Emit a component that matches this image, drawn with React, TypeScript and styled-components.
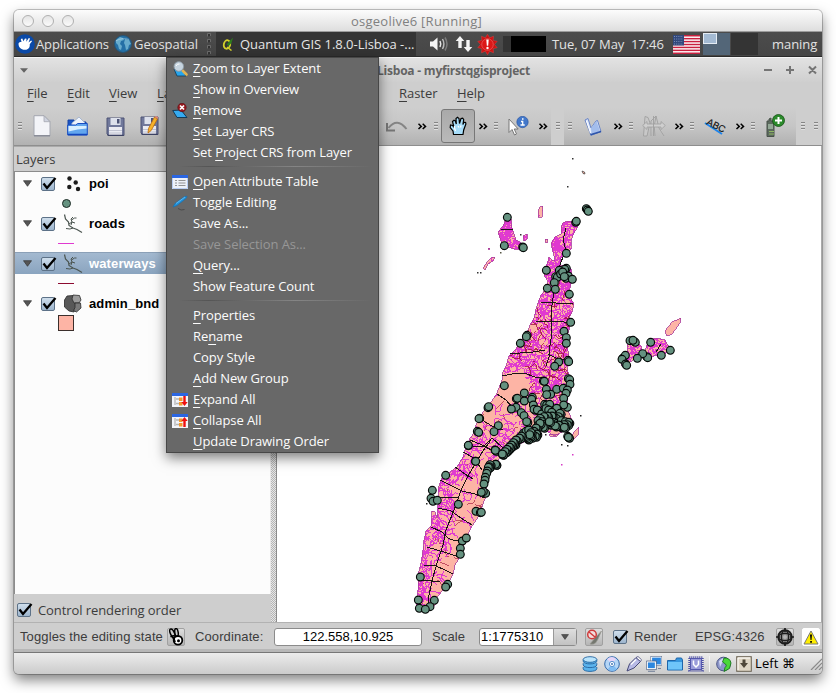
import React from "react";
import styled, { createGlobalStyle } from "styled-components";

const UI = `"Open Sans", "Noto Sans", sans-serif`;
const SANS = `"Liberation Sans", Arial, sans-serif`;

const Global = createGlobalStyle`
  *, *::before, *::after { box-sizing: border-box; }
  html, body { margin: 0; height: 100%; background: #fff; overflow: hidden; }
  svg { display: block; flex: none; }
`;

const Desktop = styled.div`
  height: 693px;
  width: 836px;
  padding: 10px 14px;
  font: 13px/1 ${UI};
  color: #3c3c3c;
`;

const VmWindow = styled.div`
  position: relative;
  display: flex;
  flex-direction: column;
  width: 808px;
  height: 664px;
  border-radius: 5px;
  background: #cecece;
  box-shadow: 0 0 0 1px rgba(0, 0, 0, 0.22), 0 6px 13px rgba(0, 0, 0, 0.5);
`;

const VmTitle = styled.div`
  height: 22px;
  flex: none;
  display: flex;
  align-items: center;
  padding-left: 8px;
  border-radius: 5px 5px 0 0;
  background: linear-gradient(#fcfcfc, #dedede);
  border-bottom: 1px solid #9c9c9c;
`;

const TrafficLight = styled.span`
  width: 12px;
  height: 12px;
  margin-right: 8px;
  border-radius: 50%;
  border: 1.5px solid #b0b0b0;
  background: linear-gradient(#e4e4e4, #fbfbfb);
`;

const VmCaption = styled.div`
  margin-left: 269px;
  padding-top: 1px;
  font-size: 13px;
  letter-spacing: 0.25px;
  color: #808080;
  white-space: nowrap;
`;

const Panel = styled.div`
  height: 25px;
  flex: none;
  display: flex;
  align-items: center;
  background: linear-gradient(#4c4c4c, #464646);
  border-bottom: 1px solid #2b2b2b;
  color: #e2e2e2;
`;

const Slot = styled.div<{ $w: number; $center?: boolean }>`
  width: ${(p) => p.$w}px;
  flex: none;
  display: flex;
  align-items: center;
  justify-content: ${(p) => (p.$center ? "center" : "flex-start")};
  white-space: nowrap;
`;

const PanelText = styled(Slot)<{ $ls?: number }>`
  height: 24px;
  letter-spacing: ${(p) => p.$ls ?? -0.05}px;
`;

const UserName = styled(PanelText)`
  padding-left: 13px;
`;

const TaskButton = styled.div`
  width: 200px;
  height: 24px;
  flex: none;
  display: flex;
  align-items: center;
  background: #343434;
  color: #e6e6e6;
  letter-spacing: -0.03px;
  white-space: nowrap;
`;

const CpuMeter = styled.div`
  width: 43px;
  height: 16px;
  flex: none;
  margin: 0 6px 0 1px;
  border-left: 8px solid #343434;
  background: #000;
`;

const Desk = styled.div<{ $active?: boolean }>`
  width: 27px;
  height: 22px;
  margin-right: 1px;
  flex: none;
  background: ${(p) => (p.$active ? "#536678" : "#343434")};
`;

const DeskWindow = styled.div`
  width: 14px;
  height: 11px;
  border: 1px solid #e4ecf4;
  background: #a3bad3;
`;

const AppTitle = styled.div`
  height: 25px;
  flex: none;
  display: flex;
  align-items: center;
  border-top: 1px solid #f6f6f6;
  background: linear-gradient(#e2e2e2, #cfcfcf);
`;

const AppCaption = styled.div`
  width: 490px;
  padding-top: 1px;
  text-align: right;
  font-weight: 700;
  font-size: 12px;
  letter-spacing: -0.22px;
  color: #646464;
  white-space: nowrap;
`;

const MenuBar = styled.div`
  height: 25px;
  flex: none;
  display: flex;
  align-items: center;
  padding: 0 0 3px 13px;
  letter-spacing: -0.05px;
`;

const Mnemonic = styled.span`
  text-decoration: underline;
  text-underline-offset: 3px;
  text-decoration-thickness: 1px;
  text-decoration-skip-ink: none;
`;

const ToolBar = styled.div`
  height: 39px;
  flex: none;
  display: flex;
  border-bottom: 1px solid #8e8e8e;
`;

const ToolGroup = styled.div<{ $plain?: boolean }>`
  display: flex;
  align-items: center;
  background: ${(p) => (p.$plain ? "#cecece" : "linear-gradient(#cecece, #c6c6c6 50%, #b1b1b1)")};
`;

const ActiveTool = styled.div`
  width: 34px;
  height: 34px;
  margin: 0 1px;
  flex: none;
  display: flex;
  align-items: center;
  justify-content: center;
  border: 1px solid #777;
  border-radius: 3px;
  background: linear-gradient(#a9a9a9, #b9b9b9);
`;

const GripLines = styled.div`
  width: 4px;
  height: 8px;
  background: repeating-linear-gradient(#858585 0 1px, #e0e0e0 1px 2px, transparent 2px 3px);
`;

const Workspace = styled.div`
  height: 476px;
  flex: none;
  display: flex;
`;

const Dock = styled.div`
  width: 257px;
  display: flex;
  flex-direction: column;
`;

const DockTitle = styled.div`
  height: 26px;
  padding-left: 2px;
  display: flex;
  align-items: center;
  border-top: 1px solid #aaa;
  border-bottom: 1px solid #8c8c8c;
`;

const Tree = styled.div`
  height: 422px;
  background: #fcfcfc;
  border-left: 1px solid #8c8c8c;
  border-right: 1px solid #e8e8e8;
`;

const LayerRow = styled.div<{ $selected?: boolean }>`
  height: 22px;
  display: flex;
  align-items: center;
  padding-left: 8px;
  font: 700 13px/22px ${SANS};
  letter-spacing: 0.12px;
  color: ${(p) => (p.$selected ? "#fff" : "#000")};
  background: ${(p) => (p.$selected ? "linear-gradient(#a3b9d0, #8aa4bf)" : "transparent")};
  border-top: 1px solid ${(p) => (p.$selected ? "#8ba0b7" : "transparent")};
`;

const LegendRow = styled.div`
  height: 18px;
  display: flex;
  align-items: center;
  padding-left: 43px;
`;

const PointSymbol = styled.div`
  width: 9px;
  height: 9px;
  margin-left: 4px;
  border-radius: 50%;
  border: 1px solid #1c2a25;
  background: #659280;
`;

const LineSymbol = styled.div<{ $color: string }>`
  width: 16px;
  height: 1px;
  background: ${(p) => p.$color};
`;

const FillSymbol = styled.div`
  width: 16px;
  height: 16px;
  border: 1px solid #3b2f2c;
  background: #fdb4a5;
`;

const Box = styled.div`
  width: 14px;
  height: 14px;
  flex: none;
  border: 1px solid #5d7288;
  border-radius: 2px;
  background: linear-gradient(#cfdeec, #9db5cd);
`;

const DockFooter = styled.div`
  height: 28px;
  display: flex;
  align-items: center;
  padding: 4px 0 0 3px;
  gap: 7px;
  letter-spacing: -0.08px;
`;

const Splitter = styled.div`
  width: 6px;
  border-right: 1px solid #8b8b8b;
  background: repeating-conic-gradient(#b5b5b5 0 25%, #e6e6e6 0 50%) 0 0 / 2px 2px;
`;

const Canvas = styled.div`
  flex: 1;
  background: #fff;
  border-right: 1px solid #aaa;
`;

const StatusBar = styled.div`
  height: 30px;
  flex: none;
  display: flex;
  align-items: center;
  padding: 2px 0 0 6px;
  border-top: 1px solid #b2b2b2;
  border-bottom: 3px solid #b7b7b7;
  font: 13px/16px ${SANS};
  letter-spacing: 0.11px;
`;

const Field = styled.div<{ $w: number }>`
  width: ${(p) => p.$w}px;
  height: 18px;
  flex: none;
  display: flex;
  align-items: center;
  justify-content: center;
  border: 1px solid #8b8b8b;
  border-radius: 3px;
  background: #fff;
  color: #000;
  letter-spacing: 0;
`;

const Combo = styled(Field)`
  justify-content: space-between;
  padding-left: 1px;
  letter-spacing: 0.1px;
`;

const ComboArrow = styled.div`
  width: 23px;
  height: 16px;
  display: flex;
  align-items: center;
  justify-content: center;
  border-left: 1px solid #999;
  background: linear-gradient(#dedede, #c2c2c2);
`;

const TinyButton = styled.div<{ $white?: boolean }>`
  width: 18px;
  height: 18px;
  flex: none;
  display: flex;
  align-items: center;
  justify-content: center;
  border: 1px solid ${(p) => (p.$white ? "#fff" : "#a0a0a0")};
  border-radius: 2px;
  background: ${(p) => (p.$white ? "#fff" : "linear-gradient(#ddd, #b5b5b5)")};
`;

const VmStatus = styled.div`
  height: 22px;
  flex: none;
  display: flex;
  align-items: center;
  padding-left: 565px;
  border-top: 1px solid #777;
  border-radius: 0 0 5px 5px;
  background: linear-gradient(#ececec, #cbcbcb);
  color: #000;
`;

const HostKey = styled.div`
  width: 56px;
  padding-left: 1px;
  flex: none;
  white-space: nowrap;
  letter-spacing: 0.1px;
`;

const Divider = styled.div`
  width: 1px;
  height: 16px;
  margin: 0 4px 0 3px;
  background: #f4f4f4;
`;

const ContextMenu = styled.div`
  position: absolute;
  left: 152px;
  top: 47px;
  width: 213px;
  height: 396px;
  border: 1px solid #474747;
  background: #686868;
  box-shadow: 0 5px 12px rgba(0, 0, 0, 0.5);
  color: #fcfcfc;
  letter-spacing: -0.08px;
`;

const MenuItem = styled.div<{ $disabled?: boolean }>`
  height: 21px;
  display: flex;
  align-items: center;
  white-space: pre;
  color: ${(p) => (p.$disabled ? "#979797" : "inherit")};
`;

const MenuIcon = styled.div`
  width: 26px;
  padding-left: 5px;
  flex: none;
`;

const MenuRule = styled.div`
  height: 1px;
  margin: 3px 6px 4px 12px;
  background: linear-gradient(90deg, transparent, #555 15%, #858585 60%, transparent);
`;

/* ---------- shared bits ---------- */

// "&" marks the letter that carries the keyboard underline.
const Label = ({ text }: { text: string }) => {
  const i = text.indexOf("&");
  if (i < 0) return <span>{text}</span>;
  return (
    <span>
      {text.slice(0, i)}
      <Mnemonic>{text[i + 1]}</Mnemonic>
      {text.slice(i + 2)}
    </span>
  );
};

const Check = () => (
  <Box>
    <svg width="18" height="16" viewBox="0 0 18 16" overflow="visible">
      <path d="M1.500 5.500 5 10 L13.500 0" fill="none" stroke="#000" strokeWidth="2.300" />
    </svg>
  </Box>
);

const Grip = ({ w = 12 }: { w?: number }) => (
  <Slot $w={w} $center>
    <GripLines />
  </Slot>
);

const More = ({ w = 15 }: { w?: number }) => (
  <Slot $w={w} $center>
    <svg width="10" height="7" viewBox="0 0 10 7" fill="none" stroke="#000" strokeWidth="1.500">
      <path d="M1.500.8 4.300 3.400 1.500 6M5.700.8 8.500 3.400 5.700 6" />
    </svg>
  </Slot>
);

const Triangle = ({ size = 9, fill = "#555" }: { size?: number; fill?: string }) => (
  <svg width={size} height={size - 2} viewBox="0 0 9 7">
    <path d="M.5.7h8L4.500 6.300z" fill={fill} stroke="#333" strokeWidth=".7" />
  </svg>
);

const TitleArrow = () => (
  <svg width="8" height="5" viewBox="0 0 8 5">
    <path d="M0 .3h8L4 4.700z" fill="#646464" />
  </svg>
);

/* ---------- panel icons ---------- */

const XubuntuIcon = () => (
  <svg width="20" height="20" viewBox="0 0 20 20">
    <circle cx="10" cy="10" r="9.800" fill="#0b4aa8" />
    <path d="M3.500 9.500c.5-1.500 2-1.700 3-1.600L5.800 5l1.500-.5 1.200 2.800L10 4.500l1.500.2-.2 3 2.500-3.700 1.200.6-1.500 3.800 2.700-2 .8.900-2.300 3c.5 3-1.200 5.700-5 5.500C6 15.700 3.500 13.500 3.500 9.500z" fill="#fff" />
  </svg>
);

const GlobeIcon = () => (
  <svg width="18" height="18" viewBox="0 0 18 18">
    <circle cx="9" cy="9" r="8.500" fill="#2470a6" stroke="#285372" />
    <path d="M2 5 6 2l3 1 1 2-3 1-1 3 2 2-1 4-2-1-1-4-2-2zM11 4l4 1 2 4-2 1-1 4-2 1-1-5-1-2z" fill="#7fc0da" opacity=".75" />
    <path d="M1.500 6Q9 2 15 4.500" stroke="#fff" strokeOpacity=".3" fill="none" />
  </svg>
);

const PanelGrip = () => (
  <svg width="4" height="22" viewBox="0 0 4 22">
    {[0, 6, 12, 18].map((y) => (
      <path key={y} d={`M.5 ${y + 3.5}V${y + 0.5}H3.500V${y + 3}`} fill="#333" stroke="#777" strokeWidth=".8" />
    ))}
  </svg>
);

const QgisIcon = () => (
  <svg width="12" height="14" viewBox="0 0 12 14">
    <ellipse cx="5" cy="7.500" rx="3.200" ry="4.300" fill="none" stroke="#d5d22b" strokeWidth="1.800" transform="rotate(12 5 7.500)" />
    <path d="M5 10l4.500 3.500" stroke="#d5d22b" strokeWidth="1.500" />
    <path d="M4.500 7.500 11 .5 9.500 6 6.500 9z" fill="#2e7d1e" />
  </svg>
);

const VolumeIcon = () => (
  <svg width="20" height="16" viewBox="0 0 20 16">
    <path d="M1 5.500h3L8.500 1.500v13L4 10.500H1z" fill="#f4f4f4" />
    <path d="M11 5q1.500 3 0 6" stroke="#e8e8e8" strokeWidth="1.500" fill="none" />
    <path d="M13.500 3q2.800 5 0 10" stroke="#bbb" strokeWidth="1.500" fill="none" />
    <path d="M16 1.500q4 6.500 0 13" stroke="#7c7c7c" strokeWidth="1.500" fill="none" />
  </svg>
);

const NetworkIcon = () => (
  <svg width="18" height="18" viewBox="0 0 18 18" fill="#f4f4f4">
    <path d="M5 1 9.300 6H6.700v7H3.300V6H.700z" />
    <path d="M13 17 8.700 12h2.600V5h3.400v7h2.600z" />
  </svg>
);

const AlertIcon = () => {
  const pts = Array.from({ length: 20 }, (_, i) => {
    const r = i % 2 ? 7 : 10.2;
    const a = (i * Math.PI) / 10 - Math.PI / 2;
    return `${10.5 + r * Math.cos(a)},${10.5 + r * Math.sin(a)}`;
  }).join(" ");
  return (
    <svg width="21" height="21" viewBox="0 0 21 21">
      <polygon points={pts} fill="#cf1212" stroke="#e04040" strokeWidth=".5" />
      <circle cx="10.500" cy="10.500" r="5.800" fill="#dc1717" stroke="#ee7070" strokeWidth=".6" />
      <path d="M9.300 5.500h2.400l-.5 6.200H9.800z" fill="#fff" />
      <circle cx="10.500" cy="14" r="1.200" fill="#fff" />
    </svg>
  );
};

const FlagIcon = () => (
  <svg width="27" height="19" viewBox="0 0 27 19">
    <rect width="27" height="19" fill="#fff" />
    {[0, 1, 2, 3, 4, 5, 6].map((i) => (
      <rect key={i} y={i * 2.92} width="27" height="1.500" fill="#c9203f" />
    ))}
    <rect width="11" height="10.500" fill="#31487c" />
    {[1.5, 4, 6.5, 9].map((y) => (
      <path key={y} d={`M1 ${y}h9`} stroke="#8496bd" strokeWidth=".9" strokeDasharray="1 1.200" />
    ))}
  </svg>
);

/* ---------- toolbar icons ---------- */

const NewIcon = () => (
  <svg width="18" height="22" viewBox="0 0 18 22">
    <path d="M1 .7h10l6 6V21H1z" fill="#f3f4f8" stroke="#a4a7b0" />
    <path d="M11 .7v6h6z" fill="#cfd3df" stroke="#a4a7b0" strokeWidth=".8" />
    <path d="M1 20.700h16" stroke="#868995" strokeWidth="1.300" />
  </svg>
);

const FolderIcon = () => (
  <svg width="21" height="20" viewBox="0 0 21 20">
    <path d="M1 4h6l1 2h11v12H1z" fill="#1c56c4" stroke="#1443a4" />
    <path d="M5 7 12 1l6 6v6H4z" fill="#eef3fb" stroke="#9badcb" strokeWidth=".8" />
    <path d="M.7 9h8l2-1.500h9.600V19H.7z" fill="#62a6ee" stroke="#1a4ec2" />
    <path d="M1.500 10h18v2.500q-9 .5-18 3z" fill="#d9efff" />
    <path d="M1 18.500h19" stroke="#1346bd" strokeWidth="1.500" />
  </svg>
);

const Disk = () => (
  <g>
    <path d="M1 1h17v17.500H2.500L1 17z" fill="#70789b" stroke="#4c5375" />
    <rect x="4.500" y="1" width="10" height="7" fill="#dde1ec" />
    <rect x="11" y="2" width="2.500" height="4.500" fill="#4c5375" />
    <rect x="3" y="10" width="13" height="8" fill="#eaebf2" />
    <path d="M3 13.500h13M3 16h13" stroke="#c1c4d2" />
    <path d="M1.500 18.300h16" stroke="#3c4263" strokeWidth="1.200" />
  </g>
);

const SaveIcon = () => (
  <svg width="19" height="19" viewBox="0 0 19 19">
    <Disk />
  </svg>
);

const SaveAsIcon = () => (
  <svg width="19" height="20" viewBox="0 0 19 20">
    <Disk />
    <path d="M8 17 8.500 12.500 14.500 1l3 2-6.300 11.500z" fill="#f7b42b" stroke="#b96a14" strokeWidth=".8" />
    <path d="M14.500 1l3 2 .8-1.700L16 0z" fill="#e88a7c" />
  </svg>
);

const UndoIcon = () => (
  <svg width="22" height="12" viewBox="0 0 22 12">
    <path d="M2.500 8Q11-3 20.500 9" fill="none" stroke="#858585" strokeWidth="2" />
    <path d="M1 3v7.500h8" fill="none" stroke="#757575" strokeWidth="2" />
  </svg>
);

const HandIcon = () => (
  <svg width="18" height="20" viewBox="0 0 18 20">
    <path
      d="M4.500 18.500 4 15 1.200 11.500 1.500 9l2 .5 1.500 2L3.500 5.500 5 4.300 6.300 5l1 3L7 2.500 8.500 1.200 10 2.500l.5 5L12 2.500l1.700-.3 1 1.500-.8 4.800 1-2.300 1.700.3.300 1.500-2.200 6L14 18.500z"
      fill="#a8defa"
      stroke="#000"
      strokeWidth="1.200"
    />
    <path d="M5.500 10v2l1 3M9 10l1 1.500M12 9.500l-.5 2" stroke="#fff" strokeWidth="1.300" fill="none" />
  </svg>
);

const IdentifyIcon = () => (
  <svg width="22" height="20" viewBox="0 0 22 20">
    <path d="M2 3v13.500l3-3L7.500 19l2-1-2.300-5h4z" fill="#fff" stroke="#777" strokeWidth="1" />
    <circle cx="15.500" cy="6" r="5.700" fill="#4378ca" stroke="#234f9d" strokeWidth=".6" />
    <path d="M14 5.500h1.700V9M13.500 9h4.200M15 3h1.500" stroke="#fff" strokeWidth="1.300" fill="none" />
  </svg>
);

const VectorIcon = () => (
  <svg width="18" height="19" viewBox="0 0 18 19">
    <path d="M1 3 4 1.500l3 9.500L12 4l1.500-.5 3.500 11-10 3.800z" fill="#dbe6fa" stroke="#5d7cc4" strokeWidth=".9" />
    <path d="M7 11 7.500 17.500 16 14 12.500 4z" fill="#a3bdec" />
    <path d="M6.500 17.800 17 14.500" stroke="#2d54ab" strokeWidth="1.500" />
    <path d="M2.500 4 6.500 16" stroke="#fff" />
  </svg>
);

const MirrorIcon = () => (
  <svg width="24" height="22" viewBox="0 0 24 22" fill="none" stroke="#9f9f9f" strokeWidth=".9">
    <path d="M1.500 21 3 1.500l3 1L8 8l-3 13zM14 1 9 6v15M14 1q-3 10-1 20M14 1l3 12 5 8" fill="#c8c8c8" />
    <path d="M.7 10.500 5 6.500v2.500h14V6.500l4.300 4L19 14.500V12H5v2.500z" fill="#cfcfcf" strokeWidth=".8" />
    <path d="M11.500 1v20" />
  </svg>
);

const LabelIcon = () => (
  <svg width="22" height="18" viewBox="0 0 22 18">
    <path d="M1 6 18 17" stroke="#1c84ee" strokeWidth="2" />
    <text x="0" y="0" transform="translate(2 7) rotate(27)" fontFamily={SANS} fontSize="9.500" fill="#111" stroke="#111" strokeWidth=".2">
      ABC
    </text>
  </svg>
);

const GpsIcon = () => (
  <svg width="20" height="24" viewBox="0 0 20 24">
    <path d="M2 7h2V5l2-1v3h3v15.500H2z" fill="#5c6a5f" stroke="#475148" />
    <rect x="3" y="10" width="5" height="5" fill="#93a896" />
    <path d="M4 17.500h5M4 20h5" stroke="#8fb763" strokeWidth="1.200" />
    <circle cx="13.500" cy="6.500" r="6" fill="#2b8a2b" stroke="#145014" strokeWidth=".8" />
    <path d="M13.500 3v7M10 6.500h7" stroke="#fff" strokeWidth="2" />
  </svg>
);

/* ---------- layer icons ---------- */

const PointsGlyph = () => (
  <svg width="20" height="18" viewBox="0 0 20 18" fill="#1d1d1d">
    <circle cx="6.500" cy="3.500" r="2.200" />
    <circle cx="12.700" cy="7.500" r="2.200" />
    <circle cx="6.300" cy="12" r="2.200" />
    <circle cx="15" cy="14" r="2.200" />
  </svg>
);

const LinesGlyph = () => (
  <svg width="20" height="20" viewBox="0 0 20 20" fill="none" stroke="#4b5550">
    <path d="M1.500.5 2.500 5 5.500 8 6 11.500 10 14 14 15.500 19 18.500" strokeWidth="1.200" />
    <path d="M6 10 9 8 8 5 10 3M9 8 8 11M9 8l3 1M8.500 6l3-2h2M3 14.500l4 .5 3-1" strokeWidth="1" />
  </svg>
);

const PolygonGlyph = () => (
  <svg width="20" height="19" viewBox="0 0 20 19" stroke="#2a2a2a" strokeWidth=".8">
    <path d="M4 2 10 1.500l3 5v7l-2 4.500-5-1-4.500-4V6z" fill="#585858" />
    <path d="M10 1l6.500.5 1.500 4.500-2 3H11L9 5z" fill="#9c9c9c" />
    <path d="M12 9h5.500l.5 5-4.500 4-3-1.500 1.500-3z" fill="#7a7a7a" />
  </svg>
);

/* ---------- context menu icons ---------- */

const ZoomLayerIcon = () => (
  <svg width="17" height="16" viewBox="0 0 17 16">
    <path d="M2 8h8l4 7H5z" fill="#27a5ec" stroke="#123a57" strokeWidth=".8" />
    <path d="M10.500 9.500 14.500 13.500" stroke="#e0b354" strokeWidth="2.600" strokeLinecap="round" />
    <circle cx="6.800" cy="5.500" r="4.800" fill="#c6d4df" stroke="#8e9aa4" />
    <path d="M4 5q1-2.500 3.500-2" stroke="#fff" fill="none" />
  </svg>
);

const RemoveIcon = () => (
  <svg width="17" height="16" viewBox="0 0 17 16">
    <path d="M.7 7.500 9 7l6 7.500H5z" fill="#36aaf0" stroke="#123a57" strokeWidth="1" />
    <circle cx="10" cy="4.500" r="4.200" fill="#981a20" stroke="#5a0a0f" strokeWidth=".6" />
    <path d="M8 2.500l4 4m0-4-4 4" stroke="#fff" strokeWidth="1.700" />
  </svg>
);

const TableIcon = () => (
  <svg width="16" height="14" viewBox="0 0 16 14">
    <rect width="16" height="14" fill="#eef1f8" />
    <rect width="16" height="3" fill="#2b66e2" />
    <path d="M3 5.500h2M3 8h2M3 10.500h2M6.500 5.500h7M6.500 8h7M6.500 10.500h7" stroke="#888" strokeWidth=".9" />
    <path d="M.5 3v10.500h15V3" stroke="#b9cdf2" fill="none" />
  </svg>
);

const PencilIcon = () => (
  <svg width="16" height="16" viewBox="0 0 16 16">
    <path d="M6 13.500q3 2.500 6.500 1" stroke="#4b4b4b" fill="none" />
    <path d="M1 12 3 8.500 12.500 1.500l2.500-.3-.5 1.800L5 10.500z" fill="#2194dd" stroke="#1a6fae" strokeWidth=".7" />
    <path d="M4 8.500 13 2" stroke="#6fbff0" strokeWidth=".8" />
  </svg>
);

const TreeIcon = ({ up }: { up?: boolean }) => (
  <svg width="16" height="14" viewBox="0 0 16 14">
    <rect width="16" height="14" fill="#f2f4fa" />
    <rect width="16" height="3" fill="#2b66e2" />
    <path d="M3 4v8M4 6h3M4 10.500h3" stroke="#b5b5b5" strokeWidth="1.300" />
    <path d="M7 4.500h3.500V8H7zM7 9h3.500v3.500H7z" fill="#f39a2e" />
    <path d={up ? "M12.500 3 15.700 7h-2v6h-2.400V7H9.300z" : "M12.500 13 15.700 9h-2V3h-2.400v6H9.300z"} fill="#f01010" />
  </svg>
);

/* ---------- status icons ---------- */

const MouseIcon = () => (
  <svg width="17" height="18" viewBox="0 0 17 18">
    <ellipse cx="4.500" cy="5.500" rx="2" ry="4.800" fill="#ccc" stroke="#000" strokeWidth="1.500" transform="rotate(-25 4.500 5.500)" />
    <ellipse cx="8.500" cy="4.500" rx="1.700" ry="4" fill="#ccc" stroke="#000" strokeWidth="1.500" transform="rotate(-8 8.500 4.500)" />
    <path d="M2.500 9q4-3 8 1" stroke="#000" strokeWidth="1.500" fill="none" />
    <circle cx="10" cy="12.300" r="4.300" fill="#fff" stroke="#000" strokeWidth="1.800" />
    <circle cx="10.500" cy="12.800" r="1.500" fill="#000" />
    <path d="M5 9l2 5" stroke="#000" strokeWidth="2" />
  </svg>
);

const StopRenderIcon = () => (
  <svg width="17" height="17" viewBox="0 0 17 17">
    <path d="M15.500 2 9 9l-5 6q4 1 6-1.500L12 10z" fill="#74776f" stroke="#9b9b94" strokeWidth=".7" />
    <circle cx="6" cy="5.500" r="4.300" fill="#f3dcdc" stroke="#cf3b3b" strokeWidth="1.500" />
    <path d="M3 3l6 5" stroke="#cf3b3b" strokeWidth="1.500" />
  </svg>
);

const CrsIcon = () => (
  <svg width="18" height="18" viewBox="0 0 18 18" fill="none" stroke="#1d1d1d">
    <circle cx="9" cy="9" r="6.800" strokeWidth="1.800" fill="#8a8a8a" />
    <ellipse cx="9" cy="9" rx="3.600" ry="6.800" strokeWidth="1.200" />
    <ellipse cx="9" cy="9" rx="6.800" ry="3.600" strokeWidth="1.200" />
    <circle cx="9" cy="9" r="2" fill="#b5b5b5" stroke="none" />
    <path d="M9 0v4M9 14v4M0 9h4M14 9h4" strokeWidth="1.700" />
  </svg>
);

const WarningIcon = () => (
  <svg width="16" height="15" viewBox="0 0 16 15">
    <path d="M8 1 15 14H1z" fill="#ffee00" stroke="#777" strokeWidth="1" strokeLinejoin="round" />
    <path d="M7 4.500h2L8.500 10h-1zM7.200 11h1.700v1.800H7.200z" fill="#000" />
  </svg>
);

const HddIcon = () => (
  <svg width="16" height="16" viewBox="0 0 16 16" stroke="#24649f" strokeWidth=".9">
    {[11.5, 7.7, 4].map((y) => (
      <path key={y} d={`M1.200 ${y - 0.5}v1.700c0 3.600 13.600 3.600 13.600 0V${y - 0.5}`} fill="#5bb3ec" />
    ))}
    <ellipse cx="8" cy="3.500" rx="6.800" ry="2.800" fill="#b9e4fc" />
  </svg>
);

const CdIcon = () => (
  <svg width="16" height="16" viewBox="0 0 16 16">
    <circle cx="8" cy="8" r="7.300" fill="#b5d6f6" stroke="#3469ab" />
    <path d="M8 8 3 3q5-4 9 0z" fill="#e5d4f8" />
    <path d="M8 8l5 5q-5 4-9 0z" fill="#7fbcf2" />
    <circle cx="8" cy="8" r="2.600" fill="#fff" stroke="#5790cf" />
    <circle cx="8" cy="8" r=".9" fill="#3469ab" />
  </svg>
);

const UsbIcon = () => (
  <svg width="16" height="16" viewBox="0 0 16 16">
    <path d="M1 15 3.500 8 10 1.500l4.500 4L8 12z" fill="#b7bae5" stroke="#464978" />
    <path d="M10 1.500l2-1 3.500 3.200-1 1.800z" fill="#fff" stroke="#464978" strokeWidth=".8" />
    <path d="M5 8.500l5-5" stroke="#fff" strokeWidth="1.300" />
  </svg>
);

const NetIcon = () => (
  <svg width="16" height="16" viewBox="0 0 16 16">
    <rect x="5.500" y="1" width="10" height="8" fill="#2b86df" stroke="#fff" strokeWidth="1.200" />
    <rect x="4.800" y=".4" width="11" height="9.200" fill="none" stroke="#5a6d8d" strokeWidth=".6" />
    <rect x="1.200" y="5.800" width="8.300" height="7" fill="#2b86df" stroke="#fff" strokeWidth="1.300" />
    <path d="M.4 5h10v8.600H.4zM2 15.300h7M12 12.500h3" fill="none" stroke="#4a5d80" strokeWidth=".7" />
  </svg>
);

const SharedIcon = () => (
  <svg width="16" height="14" viewBox="0 0 16 14">
    <path d="M.5 3.500h8l1-2.500h5l1 2v10H.5z" fill="#3796de" stroke="#1f66aa" />
    <path d="M1 5h14v7.500H1z" fill="#6fc5fa" />
  </svg>
);

const ChipIcon = () => (
  <svg width="16" height="16" viewBox="0 0 16 16">
    <rect x="1.300" y="1.300" width="13.400" height="13.400" fill="none" stroke="#4c4fa4" strokeWidth="2" strokeDasharray="1 1" />
    <rect x="2.500" y="2.500" width="11" height="11" fill="#9a9cda" stroke="#5558ac" />
    <path d="M5.500 4.500v4L8 11l2.500-2.500v-4" fill="none" stroke="#fff" strokeWidth="1.500" />
  </svg>
);

const CaptureIcon = () => (
  <svg width="17" height="16" viewBox="0 0 17 16">
    <circle cx="7.500" cy="8" r="6.800" fill="#8d97c9" stroke="#4c5687" />
    <path d="M3 5l4-3 2 2-3 3-2 4z" fill="#d5dbf4" />
    <path d="M8 2q6-.5 7 5l-1.500 5.500L8 15.500l1-4q2.500-1.500.5-3.500L6.500 6z" fill="#4ad83a" stroke="#116c15" strokeWidth=".8" />
  </svg>
);

const HostKeyIcon = () => (
  <svg width="16" height="16" viewBox="0 0 16 16">
    <rect x=".7" y=".7" width="14.600" height="14.600" fill="#dfd6c5" stroke="#6a6253" />
    <path d="M2 14V2h12" fill="none" stroke="#fff" />
    <path d="M6.500 3.500h3V7H12l-4 5-4-5h2.500z" fill="#50483a" />
  </svg>
);

const ResizeGrip = () => (
  <svg width="12" height="12" viewBox="0 0 12 12" stroke="#8a8a8a" strokeWidth="1.200">
    <path d="M1 12 12 1M5 12l7-7M9 12l3-3" />
  </svg>
);

/* ---------- map ---------- */

const MAIN_ISLAND =
  "563,223 567,221 572,222 578,221 577,228 574,233 571,240 571,249 566,254 561,258 560,265 566,266 571,269 572,278 571,284 569,291 571,299 574,304 572,312 569,318 570,327 568,333 567,345 569,357 567,368 570,380 572,387 568,395 567,403 568,410 572,420 567,430 560,433 554,436 548,432 541,428 537,437 527,441 516,445 509,450 500,457 496,466 487,473 486,485 487,493 482,507 480,514 472,526 467,536 462,550 459,558 455,565 453,574 448,584 443,590 437,597 435,605 428,610 420,610 416,605 418,590 418,575 421,563 423,550 424,540 426,531 431,526 432,511 435,512 437,518 438,505 439,495 438,488 442,478 450,472 457,467 463,457 465,450 468,444 470,438 475,432 476,425 479,418 484,411 488,407 493,399 497,393 500,385 503,378 502,374 506,366 509,356 515,350 520,343 523,338 527,333 530,325 534,318 536,309 538,303 541,295 545,290 548,281 544,275 546,268 549,257 552,260 555,260 553,252 551,243 555,237 561,234 561,227";

const ISLETS = [
  "506,219 511,219 512,228 516,240 523,244 525,249 514,249 507,247 503,250 501,241 498,232 503,226",
  "540,207 543,206 542,217 538,217 538,211",
  "523,236 527,234 527,239 524,241",
  "545,239 548,239 547,243 545,242",
  "492,257 495,257 493,261 488,264 485,270 483,268 487,262",
  "488,248 490,248 489,250",
  "627,339 636,341 642,347 639,356 630,362 622,366 621,360 627,355 627,347",
  "645,352 648,341 656,338 665,340 670,349 663,356 656,355 650,358",
  "665,331 672,322 681,318 680,323 672,334 667,336",
  "549,434 559,434 556,437 550,436",
  "574,432 579,427 578,435 573,440 571,437",
];

// Small deterministic generator so the road network is stable between renders.
const makeRandom = (seed: number) => () => {
  seed = (seed + 0x6d2b79f5) | 0;
  let t = Math.imul(seed ^ (seed >>> 15), 1 | seed);
  t = (t + Math.imul(t ^ (t >>> 7), 61 | t)) ^ t;
  return ((t ^ (t >>> 14)) >>> 0) / 4294967296;
};

// Horizontal middle of the island for a given latitude.
const midline = (y: number) => {
  const stops = [
    [220, 571], [260, 560], [300, 556], [340, 545], [380, 536], [420, 520],
    [450, 485], [480, 463], [520, 454], [560, 439], [610, 424],
  ];
  for (let i = 1; i < stops.length; i++) {
    const [y0, x0] = stops[i - 1];
    const [y1, x1] = stops[i];
    if (y <= y1) return x0 + ((x1 - x0) * (y - y0)) / (y1 - y0);
  }
  return 424;
};

const density = (x: number, y: number) => {
  if (Math.hypot((x - 514) / 15, (y - 386) / 13) < 1) return 0;
  if (x < 510 && y > 385 && y < 425) return 0.15;
  if (y < 400) return x > 500 ? 0.85 : 0.5;
  if (y < 455) return 0.35;
  const side = x - midline(y);
  return side < -3 ? 0.95 : 0.1;
};

const walks = (seed: number, count: number, steps: number, y0: number, y1: number, accept: (x: number, y: number) => number) => {
  const rnd = makeRandom(seed);
  let d = "";
  for (let n = 0; n < count; n++) {
    const y = y0 + rnd() * (y1 - y0);
    const x = midline(y) + (rnd() - 0.5) * 78;
    if (rnd() > accept(x, y)) continue;
    let px = x;
    let py = y;
    let a = rnd() * Math.PI * 2;
    d += `M${px.toFixed(1)} ${py.toFixed(1)}`;
    for (let s = 0; s < steps; s++) {
      a += (rnd() - 0.5) * 2;
      px += Math.cos(a) * 2.6;
      py += Math.sin(a) * 2.6;
      if (accept(px, py) < 0.1) break;
      d += `L${px.toFixed(1)} ${py.toFixed(1)}`;
    }
  }
  return d;
};

const ROADS = walks(7, 2300, 5, 218, 610, density);
const NORTH_ROADS = walks(19, 330, 5, 218, 300, () => 1);
const RIVERS = walks(31, 120, 4, 285, 400, (x, y) => (density(x, y) > 0.3 ? 1 : 0));
const SOUTH_RIVERS = walks(12, 45, 4, 400, 600, () => 1);
const rnd = makeRandom(5);
const ISLET_ROADS = Array.from({ length: 900 }, (_, i) => {
  const zones = [[498, 218, 28, 32], [619, 338, 52, 28], [484, 205, 64, 66]];
  const [x, y, w, h] = zones[i % 3];
  const px = x + rnd() * w;
  const py = y + rnd() * h;
  return `M${px.toFixed(1)} ${py.toFixed(1)}l${(rnd() * 6 - 3).toFixed(1)} ${(rnd() * 6 - 3).toFixed(1)}l${(rnd() * 6 - 3).toFixed(1)} ${(rnd() * 6 - 3).toFixed(1)}`;
}).join("");

const HIGHWAYS = [
  "M566 228 563 240 566 250 561 262 556 276 554 292 552 305 551 320 552 333 550 345 549 357 546 366",
  "M541 302 556 303 573 304",
  "M536 321 548 322 559 321 569 323",
  "M510 354 520 353 533 352 545 350",
  "M502 376 512 374 524 373 535 377 545 378",
  "M497 394 506 400 512 407 519 412 524 420",
  "M548 354 558 359 567 360",
  "M482 420 492 426 503 430",
  "M468 444 476 447 484 446 492 438 502 447 509 452",
  "M463 452 474 458 482 470",
  "M491 440 483 451 475 464 468 476 461 490 456 505 450 520 446 530 443 545 438 560 433 577 429 595 428 607",
  "M470 440 482 445 497 453",
  "M455 467 465 474 473 479",
  "M440 480 452 486 462 491 475 494 485 498",
  "M439 497 450 497 458 498",
  "M438 508 451 511 461 518 472 525",
  "M431 527 442 532 448 538 455 541 463 540",
  "M427 547 437 550 447 553 459 557",
  "M424 565 436 566 445 570 453 574",
  "M421 580 432 581 440 582",
  "M501 229 513 229",
  "M656 352 661 344",
];

const at = (ox: number, oy: number, flat: number[]) => {
  const out: [number, number][] = [];
  for (let i = 0; i < flat.length; i += 2) out.push([ox + flat[i] / 3, oy + flat[i + 1] / 3]);
  return out;
};

// Points are surveyed on three sheets with a third-of-a-pixel grid.
const POI: [number, number][] = [
  ...at(460, 150, [
    142, 202, 133, 287, 188, 291, 190, 293, 379, 176, 382, 180, 385, 184, 347, 217, 349, 214, 319, 310, 259, 361, 319, 355, 314, 358, 298, 361,
    287, 380, 292, 382, 302, 372, 308, 366, 325, 378, 318, 385, 313, 380, 337, 388, 283, 398, 262, 415, 286, 418, 328, 433,
  ]),
  ...at(460, 290, [
    332, 97, 312, 124, 201, 136, 199, 140, 319, 143, 181, 160, 319, 160, 324, 211, 326, 215, 296, 216, 284, 229, 250, 273, 253, 274, 325, 266,
    329, 269, 133, 287, 259, 298, 290, 298, 310, 295, 330, 283, 322, 300, 193, 309, 272, 313, 260, 314, 318, 310, 169, 326, 172, 325, 193, 333,
    217, 322, 215, 328, 311, 325, 220, 345, 84, 353, 86, 350, 168, 352, 154, 357, 222, 358, 232, 360, 254, 343, 260, 345, 269, 343, 245, 372,
    322, 352, 311, 345, 284, 360, 290, 355, 184, 368, 192, 377, 59, 385, 57, 386, 200, 395, 115, 407, 102, 425, 52, 424, 56, 427, 25, 467,
    258, 356, 266, 360, 275, 367, 300, 370, 295, 380, 288, 385, 276, 378, 262, 378, 252, 380, 240, 385, 234, 392, 246, 395, 256, 402, 270, 403,
    280, 397, 292, 400, 304, 392, 316, 395, 326, 397, 322, 404, 312, 404, 303, 411, 296, 405, 286, 408, 268, 395, 250, 412, 235, 405, 240, 400,
    228, 414, 222, 424, 230, 432, 226, 439, 214, 442, 203, 447, 196, 440, 190, 430, 198, 424, 206, 420, 213, 428, 209, 434, 184, 438, 178, 444,
    168, 450, 164, 462, 158, 465, 152, 470, 147, 475, 142, 480, 137, 485, 105, 480, 127, 493, 46, 514, 313, 412, 323, 439, 325, 442,
    510, 152, 522, 154, 526, 157, 519, 151, 572, 157, 631, 181, 604, 196, 560, 200, 563, 203, 548, 191, 532, 205, 488, 205, 496, 196, 486, 208, 497, 222,
    500, 226, 89, 526, 107, 523,
  ]),
  ...at(400, 440, [
    205, 16, 286, 31, 340, 8, 334, 15, 328, 21, 321, 28, 315, 35, 307, 42, 227, 64, 287, 73, 270, 74, 268, 80, 265, 82, 262, 93, 260, 100, 256, 112,
    255, 121, 252, 132, 257, 160, 250, 155, 244, 157, 137, 106, 97, 151, 93, 175, 99, 184, 112, 181, 175, 193, 228, 214, 241, 218, 244, 217, 187, 303,
    199, 294, 181, 325, 181, 343, 61, 411, 143, 433, 137, 441, 55, 480, 103, 481, 90, 500, 58, 505, 76, 508,
  ]),
];

// Towns hold several points on nearly the same spot; each shows as a heavier rim.
const inTown = ([x, y]: [number, number]) => (x > 524 && x < 572 && y > 408 && y < 440) || (x > 484 && x < 525 && y > 432 && y < 470);
const MARKS = POI.flatMap((p): [number, number][] => (inTown(p) ? [[p[0] + 1.2, p[1] + 1], p] : [p]));

const SPECKS: [number, number, string][] = [
  [572, 158, "#333"], [567, 186, "#333"], [583, 172, "#765"], [477, 272, "#333"], [480, 272, "#333"], [520, 234, "#333"],
  [500, 252, "#554"], [580, 415, "#222"], [545, 434, "#222"], [561, 444, "#222"], [567, 445, "#222"], [572, 454, "#d63ac6"],
  [561, 464, "#d63ac6"], [426, 503, "#222"],
];

const IslandMap = () => (
  <svg width="544" height="476" viewBox="277 146 544 476">
    <defs>
      <clipPath id="land">
        <polygon points={MAIN_ISLAND} />
      </clipPath>
      <clipPath id="islets">
        {ISLETS.map((p) => (
          <polygon key={p} points={p} />
        ))}
      </clipPath>
    </defs>
    <polygon points={MAIN_ISLAND} fill="#fdb4a5" />
    {ISLETS.map((p) => (
      <polygon key={p} points={p} fill="#fdb4a5" />
    ))}
    <g clipPath="url(#land)" fill="none" shapeRendering="crispEdges">
      <path d={SOUTH_RIVERS} stroke="#b3324f" strokeWidth=".8" />
      <path d={ROADS} stroke="#e03ad0" />
      <path d={NORTH_ROADS} stroke="#e03ad0" />
      <path d={RIVERS} stroke="#a3123f" strokeWidth=".8" />
    </g>
    <path d={ISLET_ROADS} clipPath="url(#islets)" fill="none" stroke="#e03ad0" shapeRendering="crispEdges" />
    <g fill="none" stroke="#a83a9a" strokeWidth=".8" shapeRendering="crispEdges">
      <polygon points={MAIN_ISLAND} />
      {ISLETS.map((p) => (
        <polygon key={p} points={p} />
      ))}
    </g>
    <g fill="none" stroke="#1b1414" shapeRendering="crispEdges">
      {HIGHWAYS.map((d) => (
        <path key={d} d={d} />
      ))}
    </g>
    {SPECKS.map(([x, y, c]) => (
      <rect key={`${x}-${y}`} x={x} y={y} width="1.500" height="1.500" fill={c} />
    ))}
    <path d="M582 171l2.500 1 .5 2-2-.5z" fill="#fdb4a5" stroke="#444" strokeWidth=".7" />
    <g fill="#659280" stroke="#050807" strokeWidth="1.150">
      {MARKS.map(([x, y], i) => (
        <circle key={i} cx={x} cy={y} r="3.900" />
      ))}
    </g>
  </svg>
);

/* ---------- data ---------- */

type Entry = { label: string; icon?: React.ReactNode; disabled?: boolean } | null;

const MENU: Entry[] = [
  { label: "&Zoom to Layer Extent", icon: <ZoomLayerIcon /> },
  { label: "&Show in Overview" },
  { label: "&Remove", icon: <RemoveIcon /> },
  { label: "&Set Layer CRS" },
  { label: "Set &Project CRS from Layer" },
  null,
  { label: "&Open Attribute Table", icon: <TableIcon /> },
  { label: "Toggle Editing", icon: <PencilIcon /> },
  { label: "Save As..." },
  { label: "Save Selection As...", disabled: true },
  { label: "&Query..." },
  { label: "Show Feature Count" },
  null,
  { label: "&Properties" },
  { label: "Re&name" },
  { label: "Copy Style" },
  { label: "&Add New Group" },
  { label: "&Expand All", icon: <TreeIcon /> },
  { label: "&Collapse All", icon: <TreeIcon up /> },
  { label: "&Update Drawing Order" },
];

const LAYERS = [
  { name: "poi", glyph: <PointsGlyph />, symbol: <PointSymbol /> },
  { name: "roads", glyph: <LinesGlyph />, symbol: <LineSymbol $color="#e03ad0" /> },
  { name: "waterways", glyph: <LinesGlyph />, symbol: <LineSymbol $color="#8c0a30" />, selected: true },
  { name: "admin_bnd", glyph: <PolygonGlyph />, symbol: <FillSymbol /> },
];

const MENUBAR: [string, number][] = [
  ["&File", 40],
  ["&Edit", 42],
  ["&View", 48],
  ["&Layer", 242],
  ["&Raster", 58],
  ["&Help", 40],
];

export default function App() {
  return (
    <>
      <Global />
      <Desktop>
        <VmWindow>
          <VmTitle>
            <TrafficLight />
            <TrafficLight />
            <TrafficLight />
            <VmCaption>osgeolive6 [Running]</VmCaption>
          </VmTitle>

          <Panel>
            <Slot $w={22} $center><XubuntuIcon /></Slot>
            <PanelText $w={76} $ls={-0.1}>Applications</PanelText>
            <Slot $w={22} $center><GlobeIcon /></Slot>
            <PanelText $w={67}>Geospatial</PanelText>
            <Slot $w={15} $center><PanelGrip /></Slot>
            <TaskButton>
              <Slot $w={24} $center><QgisIcon /></Slot>
              Quantum GIS 1.8.0-Lisboa -...
            </TaskButton>
            <Slot $w={13} />
            <Slot $w={26}><VolumeIcon /></Slot>
            <Slot $w={22}><NetworkIcon /></Slot>
            <Slot $w={25}><AlertIcon /></Slot>
            <CpuMeter />
            <PanelText $w={121}>Tue, 07 May&nbsp; 17:46</PanelText>
            <Slot $w={30}><FlagIcon /></Slot>
            <Desk $active><DeskWindow /></Desk>
            <Desk />
            <UserName $w={63}>maning</UserName>
          </Panel>

          <AppTitle>
            <Slot $w={6} />
            <Slot $w={20}><TitleArrow /></Slot>
            <AppCaption>Quantum GIS 1.8.0-Lisboa - myfirstqgisproject</AppCaption>
            <Slot $w={234} />
            <svg width="54" height="10" viewBox="0 0 54 10" fill="none" stroke="#757575" strokeWidth="2">
              <path d="M0 5h8M22 5h8M26 1v8M45 1.500l7 7m0-7-7 7" />
            </svg>
          </AppTitle>

          <MenuBar>
            {MENUBAR.map(([text, w]) => (
              <Slot key={text} $w={w}><Label text={text} /></Slot>
            ))}
          </MenuBar>

          <ToolBar>
            <ToolGroup>
              <Grip />
              <Slot $w={31} $center><NewIcon /></Slot>
              <Slot $w={41} $center><FolderIcon /></Slot>
              <Slot $w={34} $center><SaveIcon /></Slot>
              <Slot $w={34} $center><SaveAsIcon /></Slot>
              <Slot $w={214} />
              <Slot $w={33} $center><UndoIcon /></Slot>
              <More w={18} />
              <Grip w={9} />
              <ActiveTool><HandIcon /></ActiveTool>
              <More w={14} />
              <Grip />
              <Slot $w={32} $center><IdentifyIcon /></Slot>
              <More w={17} />
            </ToolGroup>
            <ToolGroup $plain><Grip w={13} /></ToolGroup>
            <ToolGroup>
              <Grip />
              <Slot $w={34} $center><VectorIcon /></Slot>
              <More />
              <Grip />
              <Slot $w={34} $center><MirrorIcon /></Slot>
              <More />
              <Grip />
              <Slot $w={34} $center><LabelIcon /></Slot>
              <More />
              <Grip />
              <Slot $w={6} />
              <Slot $w={31}><GpsIcon /></Slot>
            </ToolGroup>
            <ToolGroup $plain>
              <Grip w={13} />
              <Grip w={13} />
            </ToolGroup>
          </ToolBar>

          <Workspace>
            <Dock>
              <DockTitle>Layers</DockTitle>
              <Tree>
                {LAYERS.map((l) => (
                  <React.Fragment key={l.name}>
                    <LayerRow $selected={l.selected}>
                      <Slot $w={18}><Triangle /></Slot>
                      <Slot $w={22}><Check /></Slot>
                      <Slot $w={26}>{l.glyph}</Slot>
                      {l.name}
                    </LayerRow>
                    <LegendRow>{l.symbol}</LegendRow>
                  </React.Fragment>
                ))}
              </Tree>
              <DockFooter>
                <Check />
                Control rendering order
              </DockFooter>
            </Dock>
            <Splitter />
            <Canvas><IslandMap /></Canvas>
          </Workspace>

          <StatusBar>
            <Slot $w={147}>Toggles the editing state</Slot>
            <Slot $w={28}><TinyButton><MouseIcon /></TinyButton></Slot>
            <Slot $w={79}>Coordinate:</Slot>
            <Slot $w={158}><Field $w={148}>122.558,10.925</Field></Slot>
            <Slot $w={47}>Scale</Slot>
            <Slot $w={106}>
              <Combo $w={98}>
                1:1775310
                <ComboArrow><Triangle size={8} /></ComboArrow>
              </Combo>
            </Slot>
            <Slot $w={28}><TinyButton><StopRenderIcon /></TinyButton></Slot>
            <Slot $w={21}><Check /></Slot>
            <Slot $w={61}>Render</Slot>
            <Slot $w={81}>EPSG:4326</Slot>
            <Slot $w={26}><TinyButton><CrsIcon /></TinyButton></Slot>
            <TinyButton $white><WarningIcon /></TinyButton>
          </StatusBar>

          <VmStatus>
            <Slot $w={22} $center><HddIcon /></Slot>
            <Slot $w={22} $center><CdIcon /></Slot>
            <Slot $w={21} $center><UsbIcon /></Slot>
            <Slot $w={20} $center><NetIcon /></Slot>
            <Slot $w={22} $center><SharedIcon /></Slot>
            <Slot $w={20} $center><ChipIcon /></Slot>
            <Divider />
            <Slot $w={20} $center><CaptureIcon /></Slot>
            <Slot $w={20} $center><HostKeyIcon /></Slot>
            <HostKey>Left ⌘</HostKey>
            <ResizeGrip />
          </VmStatus>

          <ContextMenu>
            {MENU.map((m, i) =>
              m ? (
                <MenuItem key={m.label} $disabled={m.disabled}>
                  <MenuIcon>{m.icon}</MenuIcon>
                  <Label text={m.label} />
                </MenuItem>
              ) : (
                <MenuRule key={i} />
              ),
            )}
          </ContextMenu>
        </VmWindow>
      </Desktop>
    </>
  );
}
